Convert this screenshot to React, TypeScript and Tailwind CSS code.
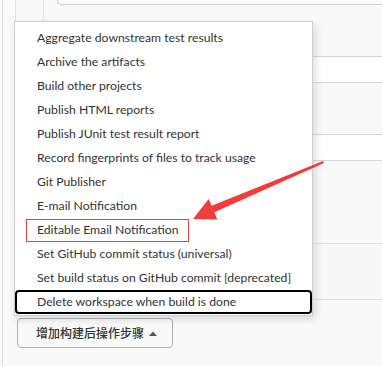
const menuItems = [
  'Aggregate downstream test results',
  'Archive the artifacts',
  'Build other projects',
  'Publish HTML reports',
  'Publish JUnit test result report',
  'Record fingerprints of files to track usage',
  'Git Publisher',
  'E-mail Notification',
  'Editable Email Notification',
  'Set GitHub commit status (universal)',
  'Set build status on GitHub commit [deprecated]',
  'Delete workspace when build is done',
];

const App = () => {
  const selected = menuItems.length - 1;

  return (
    <div
      className="relative w-[382px] h-[366px] overflow-hidden bg-[#f9f9f9] text-[#333]"
      style={{ fontFamily: 'Lato, "Noto Sans", "Noto Sans CJK SC", sans-serif' }}
    >
      {/* background form */}
      <div className="ml-[2px] h-full border-l border-[#dcdcdc] flex flex-col">
        <div className="ml-[12px] h-[300px] border-l border-[#e2e2e2]">
          <div className="ml-[27px] h-full border-l border-[#e6e6e6] flex flex-col">
            <div className="ml-[13px] h-[5px] border-b border-l border-[#d0d0d0] rounded-bl-[4px] bg-[#fbfbfb]" />
            <div className="mt-[51px] h-[31px] border-y border-[#d6d6d6] bg-white" />
            <div className="mt-[51px] h-[31px] border-y border-[#d6d6d6] bg-white" />
            <div className="mt-[82px] h-[64px] border-y border-[#e0e0e0] bg-[#f7f7f7]" />
          </div>
        </div>

        <div className="ml-[14px] mt-[18px]">
          <button
            type="button"
            className="w-[156px] h-[30px] flex items-center pl-[18px] border-[1.5px] border-[#a9b1b8] rounded-[4px] bg-[#f9f9f9] text-[12px] font-medium text-[#333]"
            style={{ fontFamily: '"Noto Sans CJK SC", sans-serif' }}
          >
            增加构建后操作步骤
            <svg width="8" height="5" viewBox="0 0 8 5" className="ml-[5px]">
              <path d="M0 5 L4 0.5 L8 5 Z" fill="#555" />
            </svg>
          </button>
        </div>
      </div>

      {/* dropdown menu */}
      <div className="absolute left-[14px] top-[21px] w-[299px] pt-[4px] pb-[1px] bg-white border border-[#cfcfcf] shadow-[2px_3px_8px_rgba(0,0,0,0.14)]">
        {menuItems.map((name, i) => (
          <div
            key={name}
            className={`h-[24px] flex items-center pl-[20px] border-2 rounded-[4px] text-[12.2px] text-[#333] whitespace-nowrap ${
              i === selected ? 'border-black' : 'border-transparent'
            }`}
          >
            {name}
          </div>
        ))}
      </div>

      {/* annotation */}
      <div className="absolute left-[26px] top-[219px] w-[163px] h-[23px] border border-[#ee3b3b]" />
      <svg className="absolute left-0 top-0 pointer-events-none" width="382" height="366">
        <polygon
          points="323,161 324,163 214.4,212.2 217.3,219.6 193,219 208.7,198.9 211.6,205.8"
          fill="#f23b3b"
        />
      </svg>
    </div>
  );
};

export default App;
